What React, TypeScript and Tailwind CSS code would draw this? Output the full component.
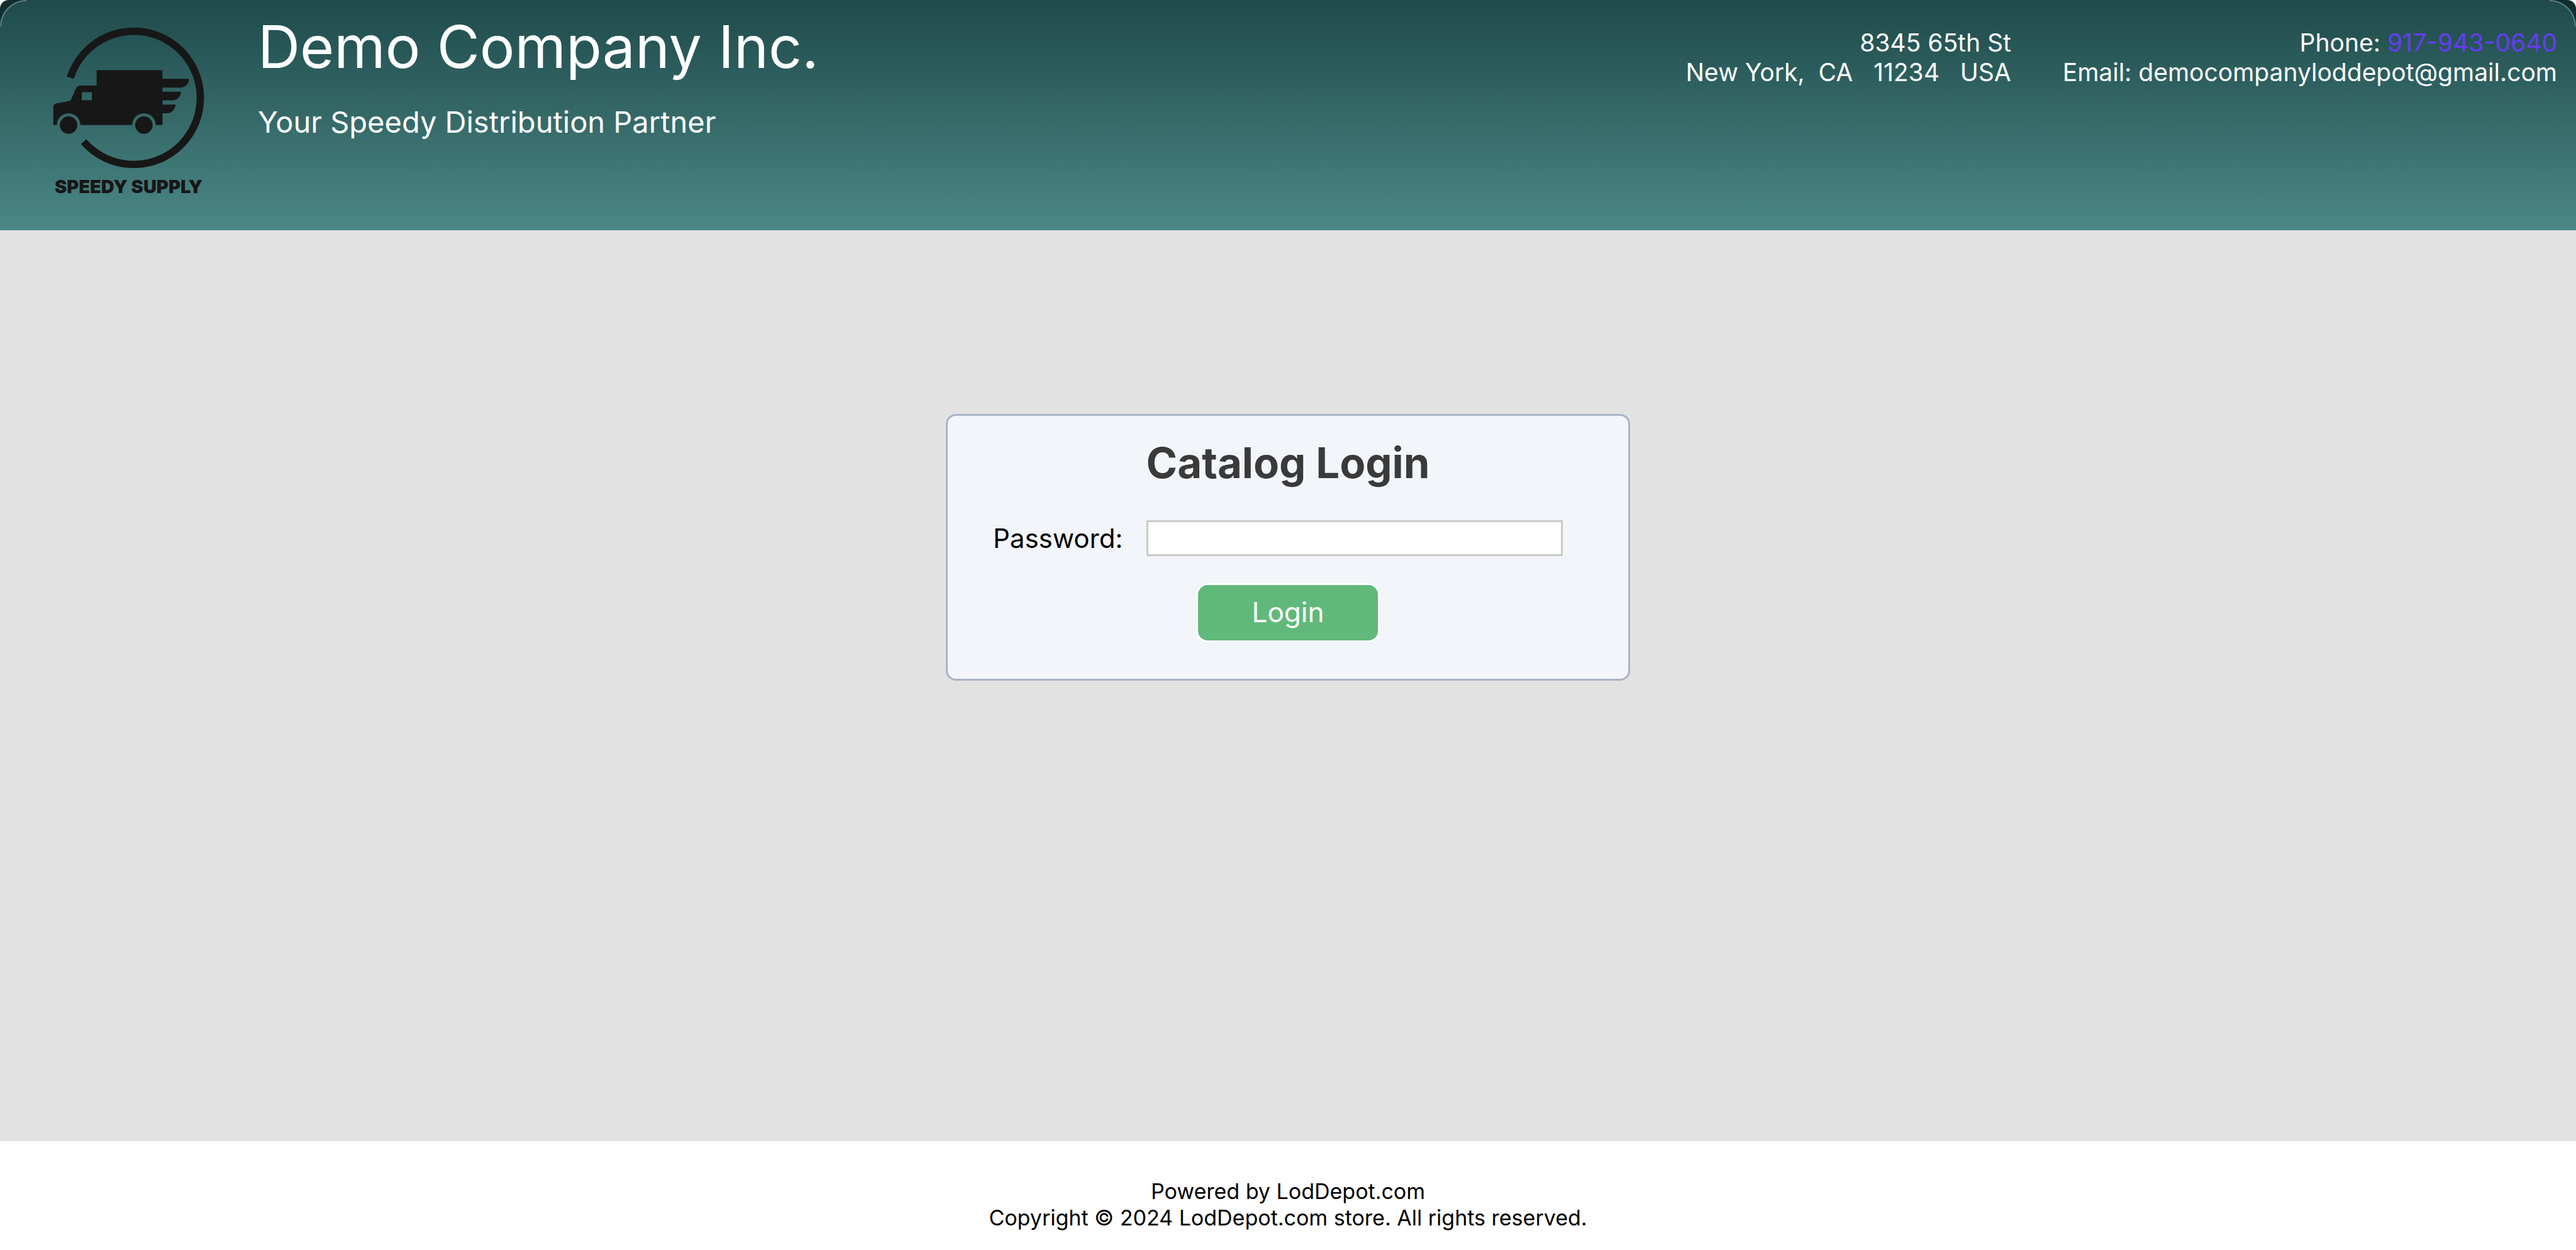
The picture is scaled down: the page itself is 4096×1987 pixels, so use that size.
const INK = "#171717";

function Logo() {
  return (
    <div className="flex w-[241px] flex-col items-center">
      <svg viewBox="115 60 330 306" className="w-full" role="img" aria-label="Delivery truck">
        <path d="M153 169A145 145 0 1 1 182 308" fill="none" stroke={INK} strokeWidth="16" />
        <path
          fill={INK}
          fillRule="evenodd"
          d="M210.300 152.300H353.700V171.300H412C411 182 404 190.300 394 190.300H353.700V199.300H394.300C393 210 386 218.300 376 218.300H353.700V227.300H382.300C381 238 374 246.300 364 246.300H353.700V272H339A25.600 25.600 0 0 0 287.800 272H175A25.600 25.600 0 0 0 123.800 272H116V233Q116 226.500 123 225L153.500 219L166 191Q168.500 186 174 186H210.300ZM178 200.300V217.700H200V200.300Z"
        />
        <circle cx="149.300" cy="272" r="19" fill={INK} />
        <circle cx="313.300" cy="272" r="19" fill={INK} />
      </svg>
      <span className="mt-3.5 text-[29px] leading-8 font-black whitespace-nowrap text-[#171717]">
        SPEEDY SUPPLY
      </span>
    </div>
  );
}

export default function App() {
  return (
    <div className="flex min-h-screen flex-col bg-white font-['Inter',sans-serif] text-black">
      <div className="relative overflow-hidden rounded-t-[14px] bg-[#102e2e]">
        <header className="flex min-h-[366px] rounded-t-[42px] bg-linear-to-b from-[#1f4b4b] to-[#4b8886] pr-[30px] pl-[84px] text-white">
          <div className="pt-11">
            <Logo />
          </div>
          <div className="ml-[85px] pt-[18px]">
            <h1 className="text-[93px] leading-[112px]">Demo Company Inc.</h1>
            <p className="mt-[35px] text-[47px] leading-[57px]">Your Speedy Distribution Partner</p>
          </div>
          <address className="ml-auto flex gap-[82px] pt-11 text-right text-[39px] leading-[47px] whitespace-pre not-italic">
            <div>
              <p>8345 65th St</p>
              <p>{"New York,  CA   11234   USA"}</p>
            </div>
            <div>
              <p>
                Phone: <a href="tel:9179430640" className="text-[#673bf5]">917-943-0640</a>
              </p>
              <p>Email: democompanyloddepot@gmail.com</p>
            </div>
          </address>
        </header>
        <span className="absolute top-0 left-0 size-[42px] rounded-tl-[42px] border-t-2 border-l-2 border-[#5d7f7f]" />
        <span className="absolute top-0 right-0 size-[42px] rounded-tr-[42px] border-t-2 border-r-2 border-[#5d7f7f]" />
      </div>
      <main className="flex-1 bg-[#e2e2e2] px-4 py-[292px]">
        <form
          onSubmit={(e) => e.preventDefault()}
          className="mx-auto flex max-w-[1088px] flex-col rounded-2xl border-3 border-[#a8b4c6] bg-[#f2f5fa] pt-[34px] pb-[58px]"
        >
          <h2 className="text-center text-[67px] leading-[81px] font-bold text-[#3a3a3a]">Catalog Login</h2>
          <div className="mt-[51px] flex items-center gap-[38px] pr-[104px] pl-[72px]">
            <label htmlFor="password" className="text-[42px] leading-[51px]">
              Password:
            </label>
            <input
              id="password"
              type="password"
              className="h-[57px] min-w-0 flex-1 border-3 border-[#cacaca] bg-white px-2 text-[39px]"
            />
          </div>
          <button
            type="submit"
            className="mt-[43px] h-[94px] w-[292px] self-center rounded-[18px] border-3 border-white bg-[#60b97a] pb-0.5 text-[44px] text-white"
          >
            Login
          </button>
        </form>
      </main>
      <footer className="pt-[59px] pb-[30px] text-center text-[34px] leading-[42px]">
        <p>Powered by LodDepot.com</p>
        <p>Copyright © 2024 LodDepot.com store. All rights reserved.</p>
      </footer>
    </div>
  );
}
